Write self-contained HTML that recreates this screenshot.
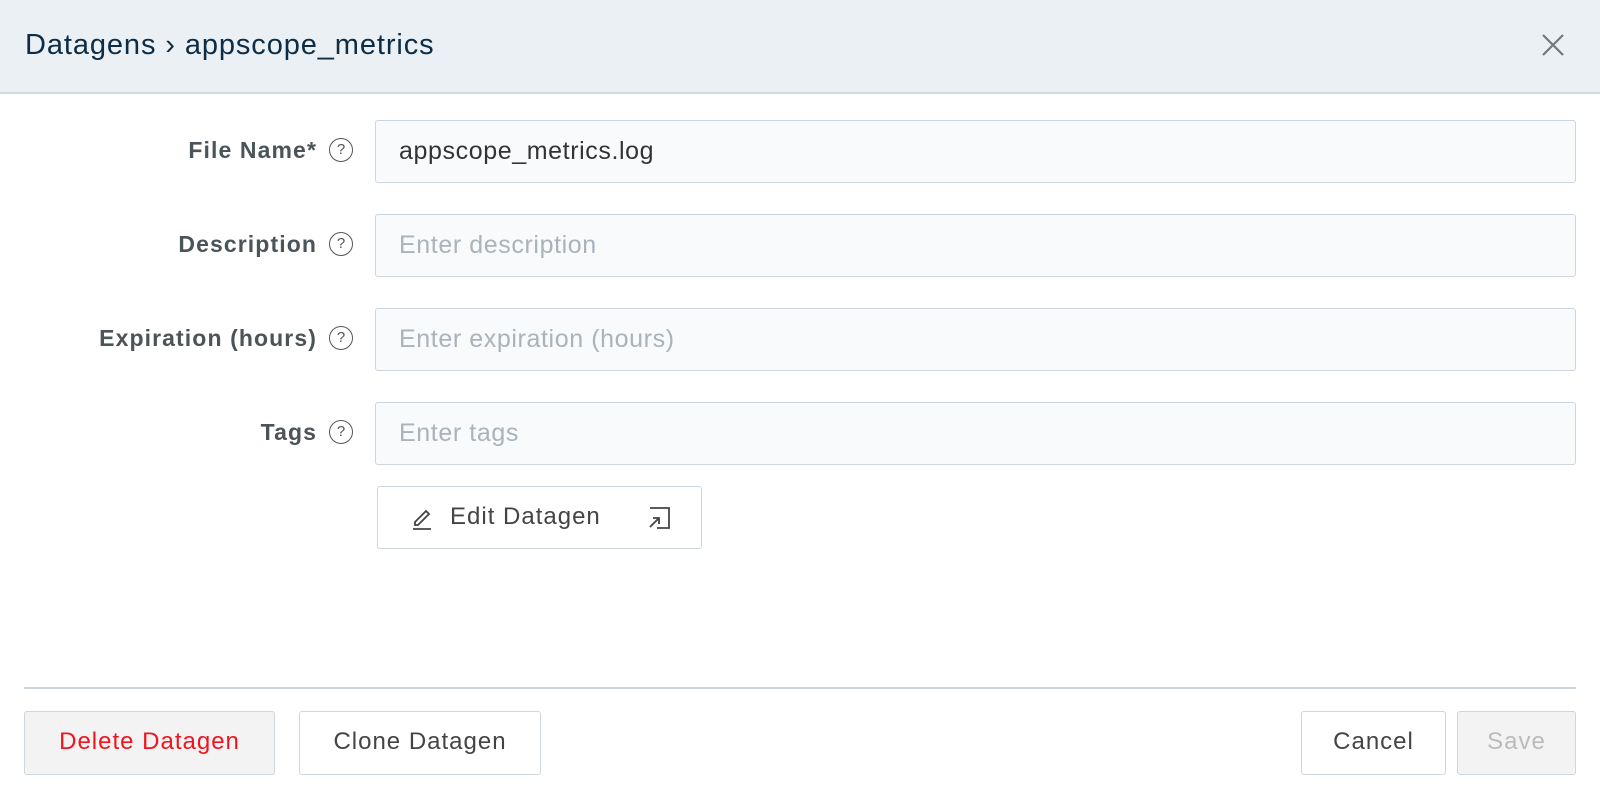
<!DOCTYPE html>
<html><head><meta charset="utf-8"><style>
*{box-sizing:border-box;margin:0;padding:0}
body{width:1600px;height:800px;background:#fff;font-family:"Liberation Sans",sans-serif;position:relative;overflow:hidden}
.hdr{position:absolute;left:0;top:0;width:1600px;height:94px;background:#ebf0f4;border-bottom:2px solid #cfd9e1}
.title{position:absolute;left:25px;top:29px;font-size:29px;letter-spacing:0.9px;color:#0d2c45;white-space:nowrap}
.x{position:absolute;left:1540px;top:32px}
.lbl{position:absolute;right:1283px;font-size:23px;letter-spacing:1.1px;font-weight:bold;color:#4b5459;white-space:nowrap}
.q{position:absolute;left:329px;width:24px;height:24px;border:1.6px solid #555;border-radius:50%;font-size:15px;text-align:center;line-height:21px;color:#555}
.inp{position:absolute;left:375px;width:1201px;height:63px;border:1.5px solid #cdd6de;border-radius:3px;background:#f8fafc;font-size:25px;letter-spacing:0.6px;padding-left:23px;line-height:60px;color:#a9b3bb}
.btn{position:absolute;height:64px;border:1.5px solid #cdd6de;border-radius:3px;font-size:24px;letter-spacing:1px;text-align:center;line-height:60px;color:#444;background:#fff}
</style></head><body>
<div class="hdr"><div class="title">Datagens › appscope_metrics</div>
<svg class="x" width="26" height="26" viewBox="0 0 26 26"><path d="M3 3L23 23M23 3L3 23" stroke="#777" stroke-width="2.2"/></svg></div>

<div class="lbl" style="top:137px">File Name*</div><div class="q" style="top:138px">?</div>
<div class="inp" style="top:120px;color:#333">appscope_metrics.log</div>
<div class="lbl" style="top:231px">Description</div><div class="q" style="top:232px">?</div>
<div class="inp" style="top:214px">Enter description</div>
<div class="lbl" style="top:325px">Expiration (hours)</div><div class="q" style="top:326px">?</div>
<div class="inp" style="top:308px">Enter expiration (hours)</div>
<div class="lbl" style="top:419px">Tags</div><div class="q" style="top:420px">?</div>
<div class="inp" style="top:402px">Enter tags</div>

<div class="btn" style="left:377px;top:486px;width:325px;height:63px;text-align:left;padding-left:72px">Edit Datagen
<svg style="position:absolute;left:32px;top:18px" width="26" height="26" viewBox="0 0 26 26"><path d="M5 17L16 6L19 9L8 20L5 20Z" fill="none" stroke="#444" stroke-width="1.8"/><path d="M3 24H21" stroke="#444" stroke-width="1.8"/></svg>
<svg style="position:absolute;left:268px;top:18px" width="26" height="26" viewBox="0 0 26 26"><path d="M4 3H23V23H11" fill="none" stroke="#444" stroke-width="1.8"/><path d="M4 22L13 13M7 13H13V19" fill="none" stroke="#444" stroke-width="1.8"/></svg>
</div>

<div style="position:absolute;left:24px;top:687px;width:1552px;height:2px;background:#cbd5de"></div>
<div class="btn" style="left:24px;top:711px;width:251px;background:#f3f3f3;color:#f0141e">Delete Datagen</div>
<div class="btn" style="left:299px;top:711px;width:242px">Clone Datagen</div>
<div class="btn" style="left:1301px;top:711px;width:145px">Cancel</div>
<div class="btn" style="left:1457px;top:711px;width:119px;background:#f3f3f3;color:#bbb">Save</div>
</body></html>
